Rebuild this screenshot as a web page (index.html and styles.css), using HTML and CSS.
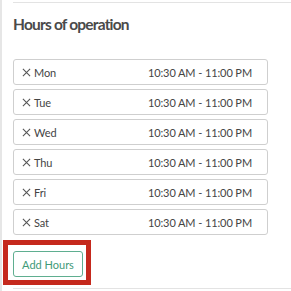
FILE: index.html
```html
<!DOCTYPE html>
<html>
<head>
<meta charset="utf-8">
<link rel="stylesheet" href="styles.css">
</head>
<body>
<div class="page">
  <section class="card">
    <h2 class="title">Hours of operation</h2>
    <ul class="hours">
      <li class="row"><span class="day"><svg class="x" viewBox="0 0 10 10"><path d="M1 1L9 9M9 1L1 9"/></svg>Mon</span><span class="time">10:30 AM - 11:00 PM</span></li>
      <li class="row"><span class="day"><svg class="x" viewBox="0 0 10 10"><path d="M1 1L9 9M9 1L1 9"/></svg>Tue</span><span class="time">10:30 AM - 11:00 PM</span></li>
      <li class="row"><span class="day"><svg class="x" viewBox="0 0 10 10"><path d="M1 1L9 9M9 1L1 9"/></svg>Wed</span><span class="time">10:30 AM - 11:00 PM</span></li>
      <li class="row"><span class="day"><svg class="x" viewBox="0 0 10 10"><path d="M1 1L9 9M9 1L1 9"/></svg>Thu</span><span class="time">10:30 AM - 11:00 PM</span></li>
      <li class="row"><span class="day"><svg class="x" viewBox="0 0 10 10"><path d="M1 1L9 9M9 1L1 9"/></svg>Fri</span><span class="time">10:30 AM - 11:00 PM</span></li>
      <li class="row"><span class="day"><svg class="x" viewBox="0 0 10 10"><path d="M1 1L9 9M9 1L1 9"/></svg>Sat</span><span class="time">10:30 AM - 11:00 PM</span></li>
    </ul>
    <button class="add">Add Hours</button>
  </section>
  <div class="highlight"></div>
</div>
</body>
</html>
```
FILE: styles.css
```css
html, body {
  margin: 0;
  padding: 0;
  background: #fff;
}
body {
  font-family: Lato, "Open Sans", sans-serif;
  color: #444;
}
.page {
  position: relative;
  width: 291px;
  height: 291px;
  overflow: hidden;
  border-left: 2px solid #e6e6e6;
  box-sizing: border-box;
  padding-top: 2px;
}
.card {
  margin-left: 11px;
  border-top: 1px solid #e3e3e3;
  border-bottom: 1px solid #e3e3e3;
  padding: 10px 0 11px 0;
}
.title {
  margin: 0;
  font-size: 15.5px;
  line-height: 22px;
  font-weight: 700;
  letter-spacing: -0.8px;
  color: #4a4a4a;
}
.hours {
  list-style: none;
  margin: 24px 0 0 0;
  padding: 0;
  width: 255px;
  display: flex;
  flex-direction: column;
  gap: 4px;
}
.row {
  height: 26px;
  box-sizing: border-box;
  border: 1px solid #cfcfcf;
  border-radius: 3px;
  display: flex;
  align-items: center;
  justify-content: space-between;
  padding: 0 15px 0 8px;
  font-size: 11px;
  letter-spacing: -0.1px;
  color: #444;
}
.day {
  display: flex;
  align-items: center;
  gap: 3px;
}
.x {
  width: 9px;
  height: 9px;
  fill: none;
  stroke: #555;
  stroke-width: 1.2;
}
.add {
  display: block;
  margin-top: 16px;
  width: 70px;
  height: 26px;
  box-sizing: border-box;
  border: 1px solid #5fae90;
  border-radius: 3px;
  background: #fff;
  color: #3f9a78;
  font-family: Lato, "Open Sans", sans-serif;
  font-size: 11px;
  padding: 0;
}
.highlight {
  position: absolute;
  left: 1px;
  top: 240px;
  width: 88px;
  height: 45px;
  box-sizing: border-box;
  border: 5px solid #c5291d;
}
```
